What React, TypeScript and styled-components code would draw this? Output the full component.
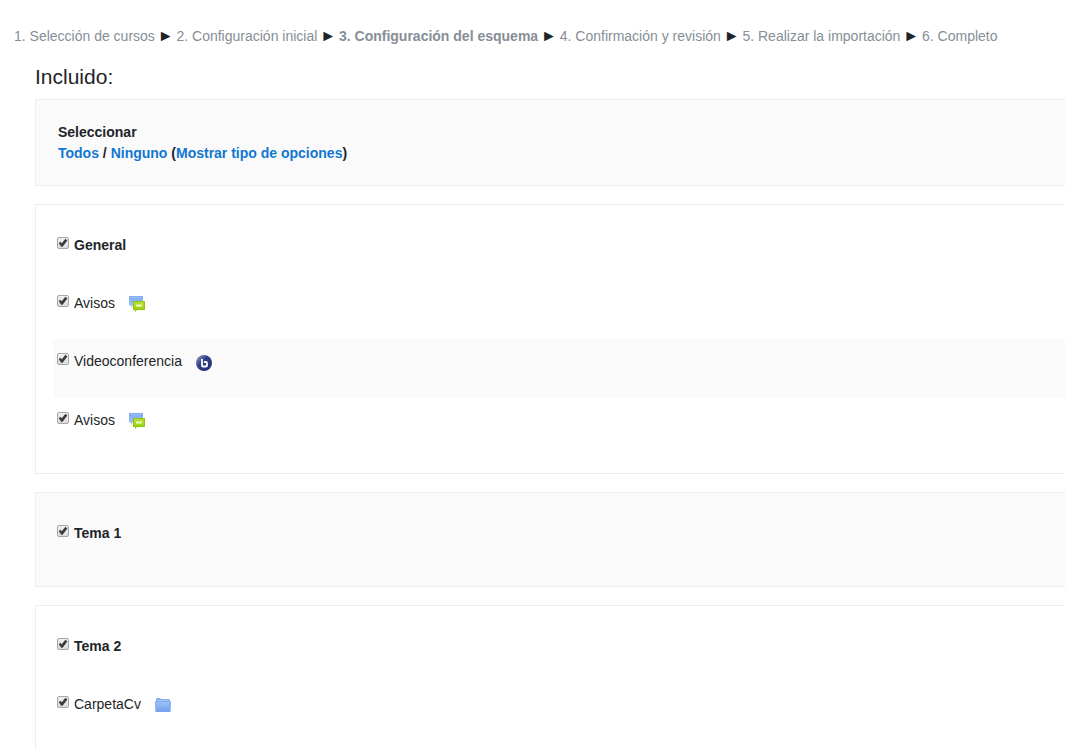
import React from 'react';
import styled, { createGlobalStyle, css } from 'styled-components';

const GlobalStyle = createGlobalStyle`
  * { box-sizing: border-box; }
  body {
    margin: 0;
    background: #fff;
    color: #212529;
    font: 14px/21px "Liberation Sans", Arial, sans-serif;
  }
`;

const Page = styled.div`
  padding: 26px 0 0 35px;
`;

const Steps = styled.nav`
  margin-left: -21px;
  color: #868e96;
`;

const Step = styled.span<{ $current?: boolean }>`
  font-weight: ${(p) => (p.$current ? 700 : 400)};
`;

const Arrow = styled.span`
  margin: 0 -1px;
  font-size: 16px;
  line-height: 1;
  color: #212529;
`;

const Title = styled.h1`
  margin: 17px 0 10px;
  font-size: 21px;
  line-height: 25px;
  font-weight: 400;
`;

const Panel = styled.section<{ $shaded?: boolean }>`
  margin-bottom: 18px;
  padding: 17px 0 17px 17px;
  border: 1px solid #eee;
  border-right: none;
  background: ${(p) => (p.$shaded ? '#fafafa' : '#fff')};
`;

const SelectBar = styled.div`
  padding: 5px 5px 4px;
  min-height: 51px;
  font-weight: 700;
`;

const Link = styled.a`
  color: #1177d1;
  text-decoration: none;
`;

const Row = styled.div<{ $heading?: boolean; $striped?: boolean }>`
  display: flex;
  align-items: flex-start;
  min-height: 58px;
  padding: 12px 4px 0;
  ${(p) => p.$heading && css`min-height: 59px; padding-top: 13px; font-weight: 700;`}
  ${(p) => p.$striped && css`min-height: 59px; background: #fafafa;`}
`;

const Label = styled.label`
  display: flex;
  align-items: flex-start;
  gap: 5px;
`;

const Checkbox = styled.input`
  appearance: none;
  flex: none;
  width: 12px;
  height: 12px;
  margin: 2px 0 0;
  border: 1px solid #a6a6a6;
  border-radius: 2px;
  background: linear-gradient(#f0f0f0, #dcdcdc);

  &:checked::before {
    content: '';
    display: block;
    width: 10px;
    height: 10px;
    background: #3c3c3c;
    clip-path: polygon(8% 52%, 22% 38%, 38% 52%, 74% 8%, 94% 24%, 46% 88%, 32% 88%);
  }
`;

const Icon = styled.svg`
  flex: none;
  width: 16px;
  height: 18px;
  margin: 3px 0 0 14px;
`;

const ForumIcon = () => (
  <Icon viewBox="0 0 16 18" aria-hidden="true">
    <defs>
      <linearGradient id="forumBlue" x1="0" y1="0" x2="0" y2="1">
        <stop offset="0" stopColor="#7eaaf0" />
        <stop offset="1" stopColor="#a4c6fa" />
      </linearGradient>
      <linearGradient id="forumGreen" x1="0" y1="0" x2="0" y2="1">
        <stop offset="0" stopColor="#b8e034" />
        <stop offset="1" stopColor="#98d010" />
      </linearGradient>
    </defs>
    <path d="M.5 0h13l.5.5V9H4l-2 3V9.500H.5L0 9V.5z" fill="url(#forumBlue)" />
    <path d="M1.500 1.500h11" stroke="#9cc0f8" />
    <path d="M4.500 5h11l.5.500v8l-.5.500H8l-2 2V14H4.500L4 13.500v-8z" fill="#8cc40c" />
    <path d="M5 6h10v7H7.500L6.500 14.500V13H5z" fill="url(#forumGreen)" />
    <rect x="7" y="8" width="6" height="3" fill="#c9ea70" />
    <rect x="7" y="9" width="6" height="1" fill="#eef9c4" />
  </Icon>
);

const ConferenceIcon = () => (
  <Icon viewBox="0 0 16 18" aria-hidden="true">
    <defs>
      <linearGradient id="conferenceBlue" x1="0" y1="0" x2="1" y2="1">
        <stop offset="0" stopColor="#a0aad0" />
        <stop offset="0.4" stopColor="#34428a" />
        <stop offset="1" stopColor="#222c6c" />
      </linearGradient>
    </defs>
    <circle cx="8" cy="9" r="8" fill="url(#conferenceBlue)" />
    <path d="M6 5v6.500q0 1 1 1h3q1 0 1-1V9q0-1-1-1H8" fill="none" stroke="#fff" strokeWidth="1.800" />
  </Icon>
);

const FolderIcon = () => (
  <Icon viewBox="0 0 16 18" aria-hidden="true">
    <defs>
      <linearGradient id="folderBlue" x1="0" y1="0" x2="0" y2="1">
        <stop offset="0" stopColor="#9dc2fa" />
        <stop offset="1" stopColor="#73a0ea" />
      </linearGradient>
    </defs>
    <path d="M1 5V2l1-1h3l1 1h8l1 1v2z" fill="#83aef2" />
    <path d="M2 3.500h12" stroke="#a6c8fb" />
    <path d="M0 4.500h16L15.500 15h-15z" fill="#7aa6ee" />
    <path d="M1 5h14l-.5 9h-13z" fill="url(#folderBlue)" />
  </Icon>
);

const icons = { forum: ForumIcon, conference: ConferenceIcon, folder: FolderIcon };

type Item = { name: string; icon: keyof typeof icons };
type Section = { name: string; shaded?: boolean; items: Item[] };

const steps = [
  '1. Selección de cursos',
  '2. Configuración inicial',
  '3. Configuración del esquema',
  '4. Confirmación y revisión',
  '5. Realizar la importación',
  '6. Completo',
];
const currentStep = 2;

const sections: Section[] = [
  {
    name: 'General',
    items: [
      { name: 'Avisos', icon: 'forum' },
      { name: 'Videoconferencia', icon: 'conference' },
      { name: 'Avisos', icon: 'forum' },
    ],
  },
  { name: 'Tema 1', shaded: true, items: [] },
  { name: 'Tema 2', items: [{ name: 'CarpetaCv', icon: 'folder' }] },
];

export default function App() {
  return (
    <>
      <GlobalStyle />
      <Page>
        <Steps>
          {steps.map((step, i) => (
            <React.Fragment key={step}>
              {i > 0 && <> <Arrow>►</Arrow> </>}
              <Step $current={i === currentStep}>{step}</Step>
            </React.Fragment>
          ))}
        </Steps>
        <Title>Incluido:</Title>
        <Panel $shaded>
          <SelectBar>
            <div>Seleccionar</div>
            <div>
              <Link href="#todos">Todos</Link> / <Link href="#ninguno">Ninguno</Link> (
              <Link href="#tipos">Mostrar tipo de opciones</Link>)
            </div>
          </SelectBar>
        </Panel>
        {sections.map((section) => (
          <Panel key={section.name} $shaded={section.shaded}>
            <Row $heading>
              <Label>
                <Checkbox type="checkbox" defaultChecked />
                {section.name}
              </Label>
            </Row>
            {section.items.map((item, i) => {
              const ItemIcon = icons[item.icon];
              return (
                <Row key={i} $striped={i % 2 === 1}>
                  <Label>
                    <Checkbox type="checkbox" defaultChecked />
                    {item.name}
                  </Label>
                  <ItemIcon />
                </Row>
              );
            })}
          </Panel>
        ))}
      </Page>
    </>
  );
}
